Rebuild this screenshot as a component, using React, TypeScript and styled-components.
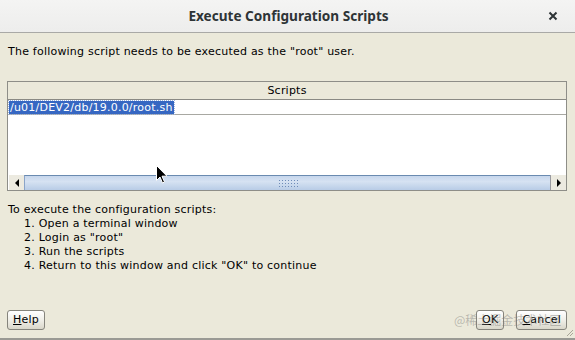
import styled, { createGlobalStyle } from "styled-components";

const GlobalStyle = createGlobalStyle`
  html, body {
    margin: 0;
    padding: 0;
    background: #ebe9da;
  }
  * {
    box-sizing: border-box;
  }
`;

const steps = [
  "Open a terminal window",
  'Login as "root"',
  "Run the scripts",
  'Return to this window and click "OK" to continue',
];

const App = () => {
  return (
    <Window>
      <GlobalStyle />
      <TitleBar>
        <Title>Execute Configuration Scripts</Title>
        <CloseButton>
          <svg width="10" height="10" viewBox="0 0 10 10">
            <path d="M1.5 1.5 L8.5 8.5 M8.5 1.5 L1.5 8.5" stroke="#2e3436" strokeWidth="2" />
          </svg>
        </CloseButton>
      </TitleBar>
      <Body>
        <Message>The following script needs to be executed as the "root" user.</Message>
        <Table>
          <HeaderCell>Scripts</HeaderCell>
          <Row>
            <Selected>/u01/DEV2/db/19.0.0/root.sh</Selected>
          </Row>
          <EmptyArea />
          <ScrollBar>
            <ArrowButton>
              <svg width="6" height="8" viewBox="0 0 6 8">
                <path d="M5 0 L1 4 L5 8 Z" fill="#000" />
              </svg>
            </ArrowButton>
            <Thumb>
              <Grip />
            </Thumb>
            <ArrowButton>
              <svg width="6" height="8" viewBox="0 0 6 8">
                <path d="M1 0 L5 4 L1 8 Z" fill="#000" />
              </svg>
            </ArrowButton>
          </ScrollBar>
        </Table>
        <Instructions>
          <Line>To execute the configuration scripts:</Line>
          {steps.map((s, i) => (
            <Step key={i}>
              {i + 1}. {s}
            </Step>
          ))}
        </Instructions>
        <ButtonRow>
          <Button>
            <u>H</u>elp
          </Button>
          <RightButtons>
            <Button>
              <u>O</u>K
            </Button>
            <Button>
              <u>C</u>ancel
            </Button>
          </RightButtons>
        </ButtonRow>
      </Body>
      <Cursor width="12" height="19" viewBox="0 0 12 19">
        <path d="M0.5 0.5 L0.5 15.5 L4 12 L6.5 18 L8.5 17 L6 11.2 L11 11.2 Z" fill="#000" stroke="#fff" strokeWidth="1" />
      </Cursor>
      <Watermark>@稀土掘金技术社区</Watermark>
      <ResizeGrip width="10" height="10" viewBox="0 0 10 10">
        <path d="M9 3 L3 9 M9 6 L6 9" stroke="#a8a698" strokeWidth="1" />
      </ResizeGrip>
    </Window>
  );
};

const Window = styled.div`
  position: relative;
  width: 575px;
  height: 340px;
  display: flex;
  flex-direction: column;
  background: #ebe9da;
  border-bottom: 2px solid #9a9a94;
  overflow: hidden;
  font-family: "DejaVu Sans", "Liberation Sans", sans-serif;
  font-size: 11px;
  letter-spacing: 0.22px;
  color: #000;
`;

const TitleBar = styled.div`
  position: relative;
  height: 33px;
  flex-shrink: 0;
  display: flex;
  align-items: center;
  justify-content: center;
  background: linear-gradient(#f4f4f3, #ededec);
  border-bottom: 1px solid #a9a9a6;
  letter-spacing: 0;
`;

const Title = styled.div`
  font-family: "Noto Sans", "Open Sans", sans-serif;
  font-weight: 700;
  font-size: 13.6px;
  color: #2e3436;
  margin-top: -2px;
  margin-left: 2px;
`;

const CloseButton = styled.div`
  position: absolute;
  right: 17px;
  top: 11px;
  display: flex;
`;

const Body = styled.div`
  flex: 1;
  display: flex;
  flex-direction: column;
  padding: 12px 8px 8px 7px;
`;

const Message = styled.div`
  line-height: 14px;
  padding-left: 1px;
`;

const Table = styled.div`
  margin-top: 22px;
  width: 560px;
  height: 110px;
  display: flex;
  flex-direction: column;
  border: 1px solid #8e8e88;
  background: #fff;
`;

const HeaderCell = styled.div`
  height: 18px;
  line-height: 17px;
  text-align: center;
  background: #ebe9da;
  border-bottom: 1px solid #8a8a84;
`;

const Row = styled.div`
  height: 15px;
  padding-left: 1px;
  display: flex;
  align-items: center;
  border-bottom: 1px solid #a8a8a2;
`;

const Selected = styled.span`
  background: #3667c2;
  color: #fff;
  line-height: 13px;
  padding: 0 1px;
  outline: 1px dotted #9cb4e0;
`;

const EmptyArea = styled.div`
  flex: 1;
`;

const ScrollBar = styled.div`
  height: 15px;
  display: flex;
  background: #ebe9da;
`;

const ArrowButton = styled.div`
  width: 16px;
  display: flex;
  align-items: center;
  justify-content: center;
  background: #eceae0;
  border-left: 1px solid #ffffff;
  &:last-child {
    border-left: 1px solid #9a9aa0;
  }
`;

const Thumb = styled.div`
  flex: 1;
  display: flex;
  align-items: center;
  justify-content: center;
  background: linear-gradient(#c6d6ec, #d6e2f2 40%, #b8cce6);
  border-top: 1px solid #6a8ab0;
  border-left: 1px solid #8aa4c8;
`;

const Grip = styled.div`
  width: 22px;
  height: 8px;
  margin-left: 2px;
  background-image: radial-gradient(circle, #6f8cb8 0.8px, transparent 1px);
  background-size: 3px 3px;
`;

const Instructions = styled.div`
  margin-top: 12px;
  padding-left: 1px;
  line-height: 14px;
`;

const Line = styled.div``;

const Step = styled.div`
  padding-left: 16px;
`;

const ButtonRow = styled.div`
  margin-top: auto;
  display: flex;
  justify-content: space-between;
  align-items: center;
`;

const RightButtons = styled.div`
  display: flex;
  gap: 12px;
`;

const Button = styled.div`
  height: 20px;
  padding: 0 5px;
  display: flex;
  align-items: center;
  border: 1px solid #85847c;
  border-radius: 3px;
  background: linear-gradient(#ffffff, #f0efe8 50%, #d9d7ca);
  font-size: 11px;
  line-height: 14px;
  u {
    text-decoration: underline;
  }
`;

const Cursor = styled.svg`
  position: absolute;
  left: 156px;
  top: 165px;
`;

const Watermark = styled.div`
  position: absolute;
  left: 454px;
  top: 311px;
  font-family: "Noto Sans CJK SC", sans-serif;
  font-size: 12px;
  letter-spacing: 0;
  color: rgba(120, 120, 120, 0.45);
  pointer-events: none;
`;

const ResizeGrip = styled.svg`
  position: absolute;
  right: 1px;
  bottom: 1px;
`;

export default App;
